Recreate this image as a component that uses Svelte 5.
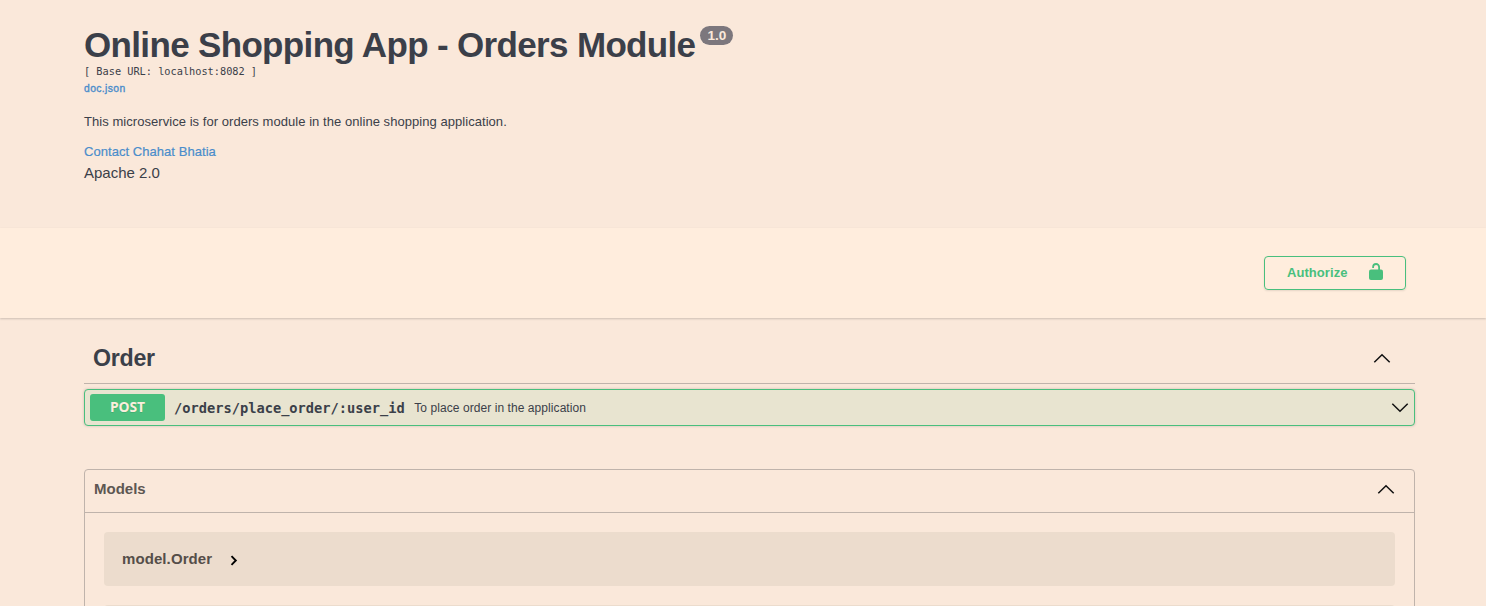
<script>
  let authorizeLabel = 'Authorize';
  let path = '/orders/place_order/:user_id';
</script>

{#snippet chevron(down)}
  <svg class="chevron" class:down width="18" height="11" viewBox="0 0 18 11">
    <path d="M1.3 9.3 9 1.7l7.7 7.6" fill="none" stroke="#111" stroke-width="1.5" />
  </svg>
{/snippet}

<main>
  <header class="info">
    <h1><span class="name">Online Shopping App - Orders Module</span><span class="version">1.0</span></h1>
    <pre>[ Base URL: localhost:8082 ]</pre>
    <a class="doc" href="#doc">doc.json</a>
    <p><span>This microservice is for orders module in the online shopping application.</span></p>
    <a class="contact" href="#contact">Contact Chahat Bhatia</a>
    <div class="license">Apache 2.0</div>
  </header>

  <section class="scheme">
    <button>
      <span>{authorizeLabel}</span>
      <svg width="14" height="18" viewBox="0 0 14 18">
        <rect x="0" y="6.6" width="14" height="10.4" rx="2" fill="#49bf7d" />
        <path d="M10.1 7V4a3 3 0 0 0-6 0v1" fill="none" stroke="#49bf7d" stroke-width="1.8" />
      </svg>
    </button>
  </section>

  <section class="operations">
    <div class="tag"><h2>Order</h2>{@render chevron(false)}</div>
    <div class="operation">
      <span class="method">POST</span>
      <code>{path}</code>
      <span class="summary">To place order in the application</span>
      {@render chevron(true)}
    </div>
  </section>

  <section class="models">
    <div class="models-head"><h4>Models</h4>{@render chevron(false)}</div>
    <div class="model">
      <span>model.Order</span>
      <svg width="8" height="11" viewBox="0 0 8 11"><path d="M1.5 1.2 5.8 5.5 1.5 9.8" fill="none" stroke="#000" stroke-width="1.9" /></svg>
    </div>
    <div class="model"></div>
  </section>
</main>

<style>
  :global(body) { overflow: hidden; background: #fae8da; }
  main {
    height: 606px; overflow: hidden; background: #fae8da; color: #3b4049;
    font-family: "Liberation Sans", Arial, sans-serif;
  }
  * { box-sizing: border-box; }
  h1, h2, h4, p, pre { margin: 0; }
  a { text-decoration: none; color: #4a8dcb; white-space: nowrap; }
  .info { height: 228px; padding: 24px 84px 0; display: flex; flex-direction: column; align-items: flex-start; }
  h1 { display: flex; height: 41px; font-size: 35px; line-height: 41px; color: #3b3f49; white-space: nowrap; }
  .name { letter-spacing: -.66px; }
  .version {
    width: 33px; height: 19px; margin: 2px 0 0 5px; border-radius: 10px; background: #7c777d;
    color: #fae8da; font-size: 13.6px; line-height: 19px; text-align: center;
  }
  pre { font: 10.28px/14px "DejaVu Sans Mono", monospace; height: 14px; margin-top: -1px; }
  .doc { font-size: 10.3px; line-height: 14px; margin-top: 4px; letter-spacing: .4px; -webkit-text-stroke: .35px #4a8dcb; }
  p { font-size: 13px; line-height: 16px; margin-top: 18px; white-space: nowrap; letter-spacing: .05px; }
  .contact { font-size: 13px; line-height: 16px; margin-top: 14px; letter-spacing: .05px; -webkit-text-stroke: .2px #4a8dcb; }
  .license { font-size: 15px; line-height: 18px; margin-top: 4px; }
  .scheme {
    height: 90px; padding: 28px 80px 0; display: flex; justify-content: flex-end; align-items: flex-start;
    background: #ffeddd; box-shadow: 0 1px 2px rgba(0, 0, 0, .18);
  }
  button {
    display: flex; align-items: flex-start; justify-content: space-between; width: 142px; height: 34px; padding: 6px 22.5px 0 22px;
    border: 1px solid #49bf7d; border-radius: 4px; background: transparent; color: #49bf7d;
    box-shadow: 0 1px 2px rgba(0, 0, 0, .1); font: bold 13px/19px "Liberation Sans", Arial, sans-serif;
  }
  button span { letter-spacing: .06px; }
  .operations { margin: 0 71px 0 84px; padding-top: 18px; }
  .tag {
    height: 48px; padding: 0 24.5px 3px 9px; display: flex; justify-content: space-between; align-items: center;
    border-bottom: 1px solid #bfb3ab;
  }
  h2 { font-size: 23.2px; line-height: 30px; letter-spacing: -.25px; }
  .chevron { display: block; flex: none; }
  .down { transform: rotate(180deg); }
  .operation {
    margin-top: 5px; height: 37px; padding: 0 5px; display: flex; align-items: center; white-space: nowrap;
    border: 1px solid #49bf7d; border-radius: 4px; background: #e8e4d0; box-shadow: 0 0 3px rgba(0, 0, 0, .19);
  }
  .method {
    width: 75px; height: 27px; border-radius: 3px; background: #49bf7d; color: #faeedc;
    text-align: center; font-family: "Open Sans", sans-serif; font-size: 13.8px; font-weight: bold; line-height: 26px; text-shadow: 0 1px 0 rgba(0, 0, 0, .1);
  }
  code { margin-left: 9px; font: bold 13.7px/20px "DejaVu Sans Mono", monospace; }
  .summary { margin-left: 9.5px; font-size: 12px; line-height: 18px; letter-spacing: .07px; }
  .operation .chevron { margin-left: auto; }
  .models { margin: 43px 71px 0 84px; height: 200px; border: 1px solid #bfb3ab; border-radius: 4px; }
  .models-head {
    height: 43px; padding: 0 19px 4px 9px; display: flex; align-items: center; justify-content: space-between;
    border-bottom: 1px solid #bfb3ab; color: #5d5752;
  }
  h4 { font-size: 15px; line-height: 20px; }
  .model {
    height: 54px; margin: 19px 19px 0; padding-left: 18px; border-radius: 4px; background: #ecdccd;
    display: flex; align-items: center; gap: 18px; color: #554e49; font-size: 15px; font-weight: bold;
  }
  .model span { margin-top: -2px; letter-spacing: .09px; }
  .model svg { margin-top: 3px; }
</style>
